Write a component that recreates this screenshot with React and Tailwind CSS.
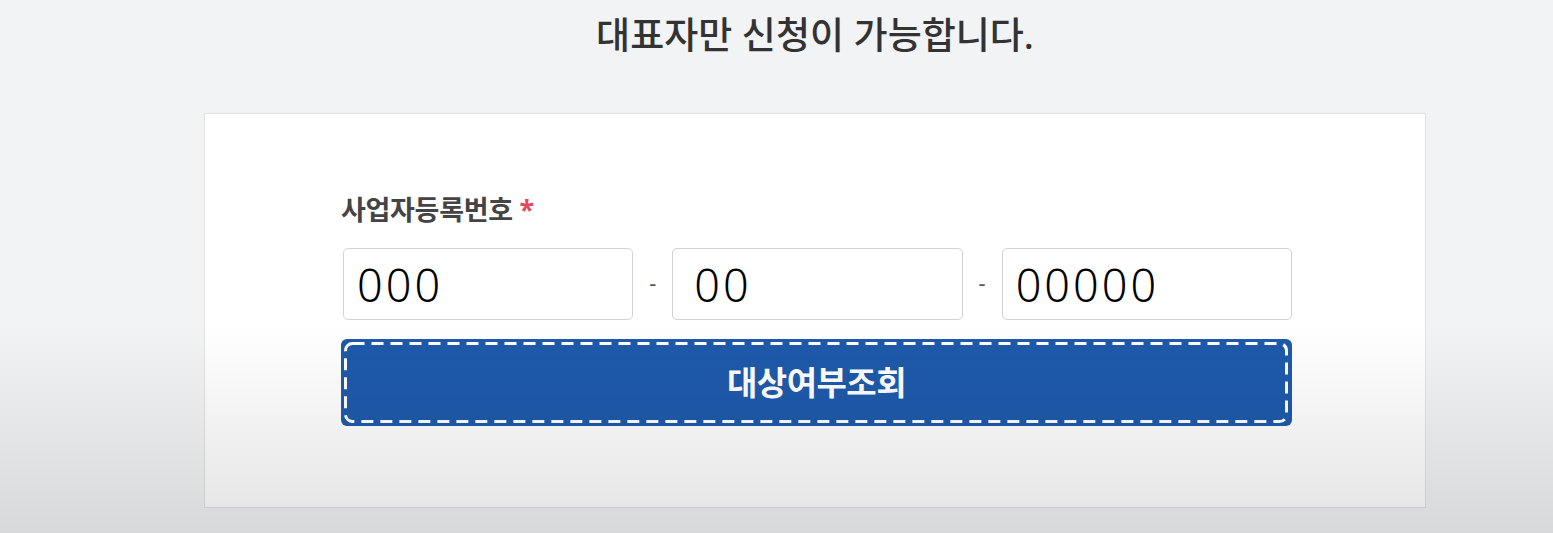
const fontStack = { fontFamily: '"Noto Sans", "Noto Sans CJK KR", sans-serif' };

const NumberBox = ({ value, pad = "pl-[13px]" }) => (
  <input
    readOnly
    value={value}
    className={`h-[72px] w-full min-w-0 rounded-[5px] border border-[#d2d2d2] bg-white pr-[13px] text-[45px] font-light tracking-[3px] text-black outline-none ${pad}`}
    style={fontStack}
  />
);

const Dash = () => (
  <span className="flex items-center justify-center pb-[4px] text-[22px] text-[#555]">-</span>
);

export default function App() {
  return (
    <div className="relative min-h-[533px] bg-[#f2f3f5] pl-[204px] pr-[127px]" style={fontStack}>
      <h1 className="pt-[10px] text-center text-[37px] font-medium leading-[50px] text-[#333]">
        대표자만 신청이 가능합니다.
      </h1>

      <section className="mt-[53px] border border-[#e2e2e2] bg-white pb-[81px] pl-[136px] pr-[133px] pt-[80px]">
        <label className="mb-[22px] block text-[27px] font-bold leading-[32px] tracking-[-0.3px] text-[#444]">
          사업자등록번호 <span className="text-[#e5485a]">*</span>
        </label>

        <div className="grid grid-cols-[1fr_39px_1fr_39px_1fr] pl-[2px]">
          <NumberBox value="000" />
          <Dash />
          <NumberBox value="00" pad="pl-[21px]" />
          <Dash />
          <NumberBox value="00000" />
        </div>

        <button className="relative mt-[19px] flex h-[87px] w-full items-center justify-center rounded-[6px] bg-[#1e5aab] text-[33px] font-bold tracking-[-0.5px] text-white">
          <svg className="pointer-events-none absolute inset-[3px]" width="944" height="81">
            <rect
              x="1.5"
              y="1.5"
              width="941"
              height="78"
              rx="7"
              fill="none"
              stroke="#ffffff"
              strokeWidth="3"
              strokeDasharray="12 7"
            />
          </svg>
          대상여부조회
        </button>
      </section>

      <div className="pointer-events-none absolute inset-x-0 bottom-0 h-[210px] bg-linear-to-b from-transparent to-black/[0.11]" />
    </div>
  );
}
